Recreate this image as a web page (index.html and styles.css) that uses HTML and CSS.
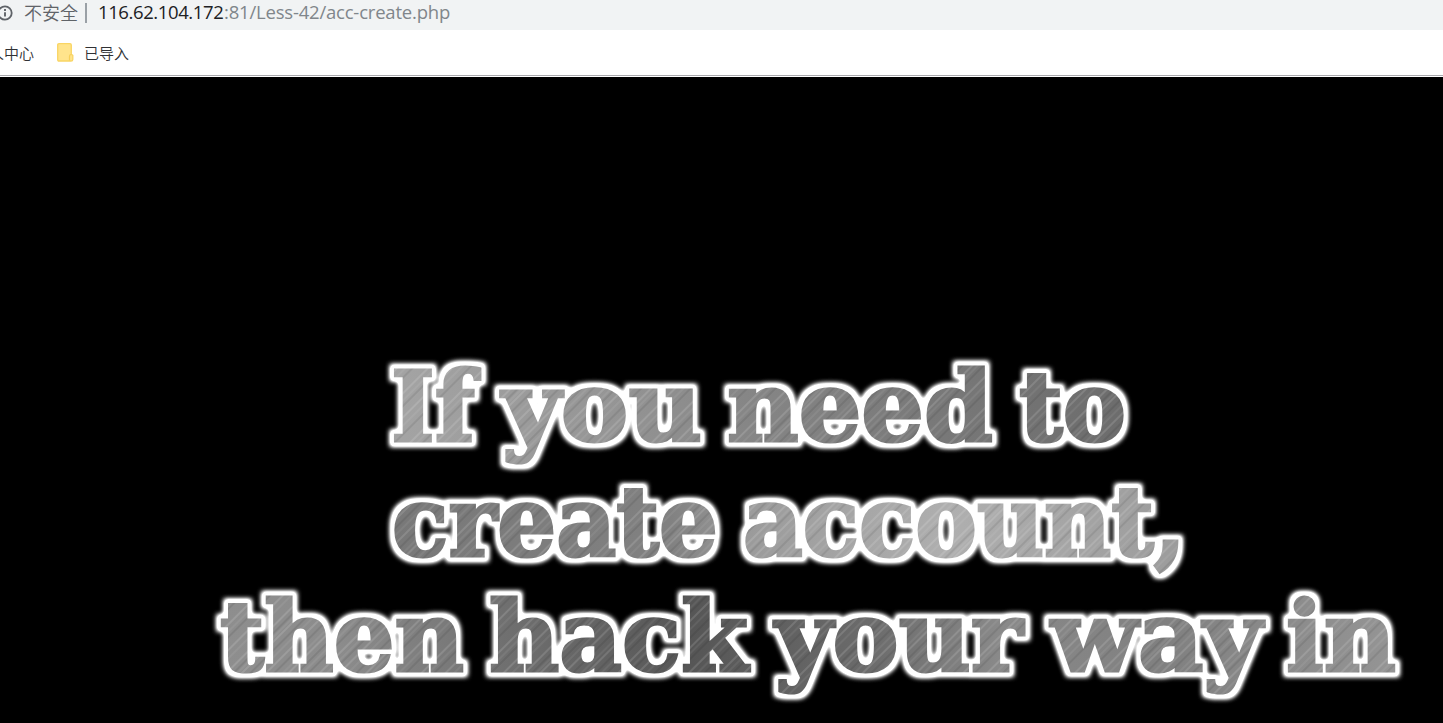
FILE: index.html
```html
<!DOCTYPE html>
<html lang="zh">
<head>
<meta charset="utf-8">
<title>acc-create.php</title>
<link rel="stylesheet" href="styles.css">
</head>
<body>
<header class="address">
  <svg class="info" width="14" height="18" viewBox="0 0 14 18"><circle cx="5" cy="9" r="6.7" fill="none" stroke="#5f6368" stroke-width="1.8"/><path d="M5 8.2v4.4M5 5v2" stroke="#5f6368" stroke-width="1.9"/></svg>
  <span class="insecure">不安全</span>
  <span class="divider"></span>
  <span class="url"><span class="host">116.62.104.172</span><span class="path">:81/Less-42/acc-create.php</span></span>
</header>
<nav class="bookmarks">
  <span class="mark first">人中心</span>
  <svg class="folder" width="17" height="19" viewBox="0 0 17 19"><path d="M2 .7h11q1.3 0 1.3 1.3v9.2l1.5 1.2v4q0 1.6-1.8 1.6H2Q.7 18 .7 16.700V2Q.7.7 2 .7Z" fill="#ffe48c" stroke="#f9d564" stroke-width="1.3"/><path d="M12.500 17.500v-4.200q0-1.800 1.800-1.800" fill="none" stroke="#f6cf58" stroke-width="1.200"/></svg>
  <span class="mark">已导入</span>
</nav>
<main class="page">
  <svg class="banner" width="1443" height="646" viewBox="0 77 1443 646">
    <defs>
      <linearGradient id="g1" gradientUnits="userSpaceOnUse" x1="390" y1="0" x2="1130" y2="0">
        <stop offset="0" stop-color="#a4a4a4"/><stop offset=".3" stop-color="#959595"/><stop offset=".48" stop-color="#868686"/><stop offset=".75" stop-color="#787878"/><stop offset="1" stop-color="#6c6c6c"/>
      </linearGradient>
      <linearGradient id="g2" gradientUnits="userSpaceOnUse" x1="390" y1="0" x2="1190" y2="0">
        <stop offset="0" stop-color="#787878"/><stop offset=".35" stop-color="#818181"/><stop offset=".45" stop-color="#9b9b9b"/><stop offset=".7" stop-color="#afafaf"/><stop offset="1" stop-color="#9b9b9b"/>
      </linearGradient>
      <linearGradient id="g3" gradientUnits="userSpaceOnUse" x1="220" y1="0" x2="1400" y2="0">
        <stop offset="0" stop-color="#8e8e8e"/><stop offset=".1" stop-color="#8c8c8c"/><stop offset=".24" stop-color="#707070"/><stop offset=".4" stop-color="#565656"/><stop offset=".55" stop-color="#6b6b6b"/><stop offset=".66" stop-color="#898989"/><stop offset=".8" stop-color="#808080"/><stop offset="1" stop-color="#959595"/>
      </linearGradient>
      <pattern id="grain" width="37" height="211" patternUnits="userSpaceOnUse" patternTransform="rotate(-45)">
        <g stroke-width="1.2">
          <path d="M0 3h37M0 14h37M0 31h37M0 47h37M0 69h37M0 83h37M0 102h37M0 119h37M0 141h37M0 158h37M0 181h37M0 199h37" stroke="#fff" stroke-opacity=".26"/>
          <path d="M0 8h37M0 20h37M0 37h37M0 53h37M0 61h37M0 77h37M0 95h37M0 110h37M0 130h37M0 150h37M0 170h37M0 190h37" stroke="#000" stroke-opacity=".16"/>
          <path d="M0 11h37M0 25h37M0 43h37M0 57h37M0 74h37M0 89h37M0 106h37M0 125h37M0 146h37M0 164h37M0 186h37M0 205h37" stroke="#fff" stroke-opacity=".12"/>
        </g>
      </pattern>
      <pattern id="metal" width="1443" height="723" patternUnits="userSpaceOnUse">
        <rect width="1443" height="480" fill="url(#g1)"/>
        <rect y="480" width="1443" height="102" fill="url(#g2)"/>
        <rect y="582" width="1443" height="141" fill="url(#g3)"/>
        <rect width="1443" height="723" fill="url(#grain)"/>
      </pattern>
      <filter id="glow" filterUnits="userSpaceOnUse" x="150" y="300" width="1293" height="423" color-interpolation-filters="sRGB">
        <feMorphology in="SourceAlpha" operator="dilate" radius="4"/>
        <feGaussianBlur stdDeviation="2.6"/>
        <feComponentTransfer result="halo">
          <feFuncR type="linear" slope="0" intercept="1"/><feFuncG type="linear" slope="0" intercept="1"/><feFuncB type="linear" slope="0" intercept="1"/><feFuncA type="linear" slope="1.8" intercept="0"/>
        </feComponentTransfer>
        <feMerge><feMergeNode in="halo"/><feMergeNode in="SourceGraphic"/></feMerge>
      </filter>
    </defs>
    <g class="slogan" filter="url(#glow)">
      <text x="391" y="441" textLength="84" lengthAdjust="spacingAndGlyphs">If</text>
      <text x="502" y="441" textLength="200" lengthAdjust="spacingAndGlyphs">you</text>
      <text x="727" y="441" textLength="266" lengthAdjust="spacingAndGlyphs">need</text>
      <text x="1019" y="441" textLength="107" lengthAdjust="spacingAndGlyphs">to</text>
      <text x="392" y="556" textLength="326" lengthAdjust="spacingAndGlyphs">create</text>
      <text x="743" y="556" textLength="443" lengthAdjust="spacingAndGlyphs">account,</text>
      <text x="220" y="671" textLength="244" lengthAdjust="spacingAndGlyphs">then</text>
      <text x="489" y="671" textLength="259" lengthAdjust="spacingAndGlyphs">hack</text>
      <text x="775" y="671" textLength="248" lengthAdjust="spacingAndGlyphs">your</text>
      <text x="1051" y="671" textLength="211" lengthAdjust="spacingAndGlyphs">way</text>
      <text x="1286" y="671" textLength="110" lengthAdjust="spacingAndGlyphs">in</text>
    </g>
  </svg>
</main>
</body>
</html>
```
FILE: styles.css
```css
body { margin: 0; background: #000; overflow: hidden; font-family: "Open Sans", "Noto Sans CJK SC", sans-serif; }
.address { display: flex; align-items: center; height: 30px; box-sizing: border-box; padding-bottom: 5px; background: #f1f3f4; white-space: nowrap; }
.info { flex: none; margin-right: 10px; }
.insecure { width: 54px; margin-top: -2px; font: 350 18px/24px "Noto Sans CJK SC", sans-serif; color: #5f6368; }
.divider { width: 2px; height: 20px; margin: 0 11px 0 7px; background: #9aa0a6; }
.url { margin-top: -2px; font-size: 18.500px; line-height: 24px; }
.host, .path { display: inline-block; }
.host { width: 126px; letter-spacing: -0.4px; color: #202124; }
.path { letter-spacing: -0.2px; color: #80868b; }
.bookmarks { display: flex; align-items: center; height: 47px; box-sizing: border-box; background: linear-gradient(#a9a9ad, #a9a9ad) 0 45px / 100% 1px no-repeat #fff; white-space: nowrap; }
.mark { margin-top: -2px; font: 350 15px/22px "Noto Sans CJK SC", sans-serif; color: #303134; }
.first { margin-left: -11px; }
.folder { margin: -2px 10px 0 23px; }
.page { height: 646px; background: #000; }
.banner { display: block; }
.slogan { font: bold 98px "DejaVu Serif", serif; fill: url(#metal); stroke: url(#metal); stroke-width: 3px; }
```
